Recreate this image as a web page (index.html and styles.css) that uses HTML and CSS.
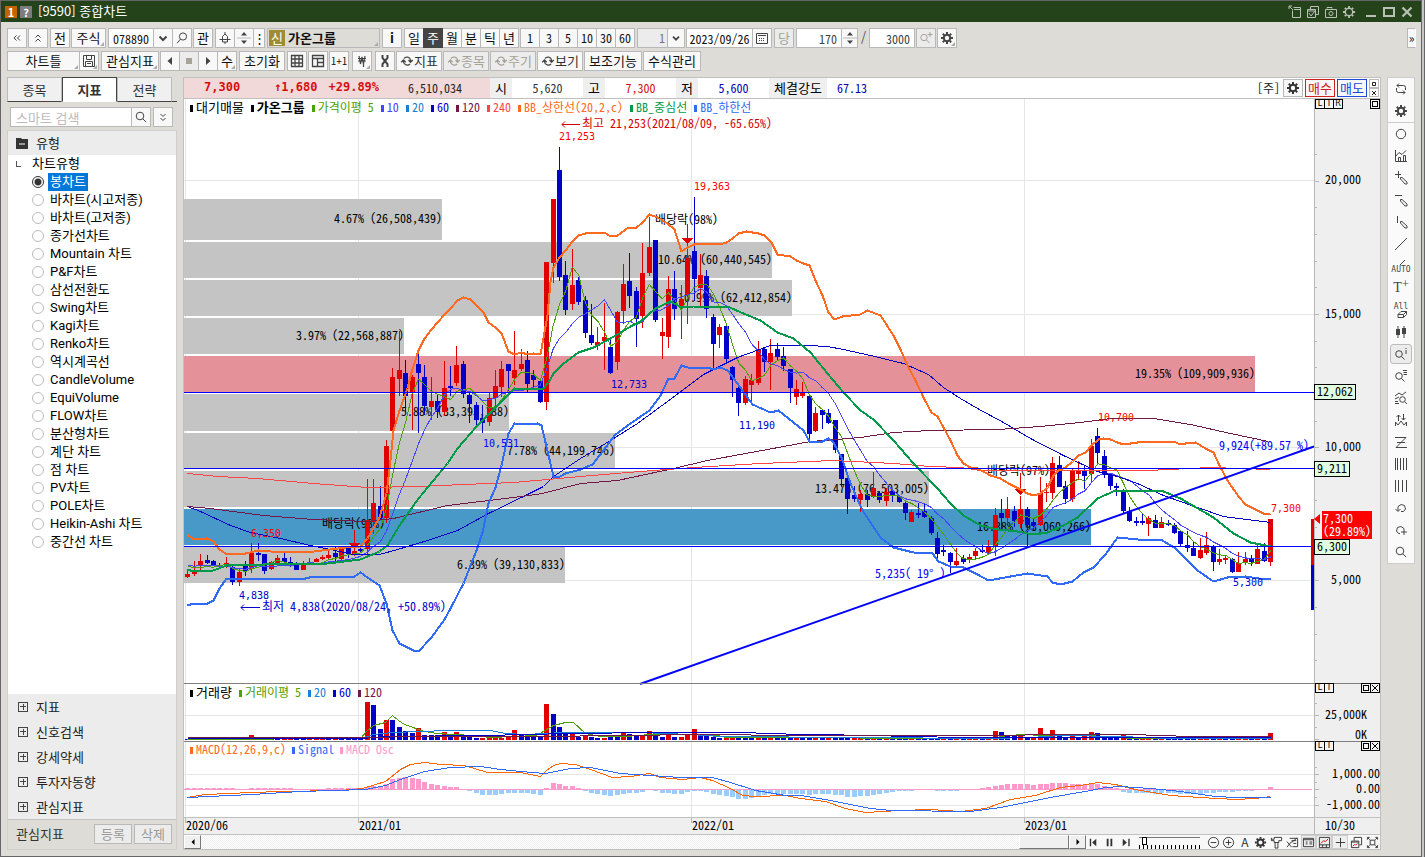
FILE: index.html
```html
<!DOCTYPE html>
<html lang="ko">
<head>
<meta charset="utf-8">
<title>[9590] 종합차트</title>
<link rel="stylesheet" href="styles.css">
</head>
<body>
<svg class="sheet" aria-hidden="true">
  <symbol id="gear" viewBox="0 0 14 14"><g fill="none" stroke="currentColor"><circle cx="7" cy="7" r="3.2" stroke-width="2"/><path stroke-width="2" d="M7 1v2M7 11v2M1 7h2M11 7h2M2.8 2.8l1.4 1.4M9.8 9.8l1.4 1.4M2.8 11.2l1.4-1.4M9.8 4.2l1.4-1.4"/></g></symbol>
  <symbol id="gearthin" viewBox="0 0 14 14"><g fill="none" stroke="currentColor"><circle cx="7" cy="7" r="3.7" stroke-width="1.4"/><path stroke-width="1.8" d="M7 1v2M7 11v2M1 7h2M11 7h2M2.8 2.8l1.3 1.3M9.9 9.9l1.3 1.3M2.8 11.2l1.3-1.3M9.9 4.1l1.3-1.3"/></g></symbol>
  <symbol id="lens" viewBox="0 0 14 14"><g fill="none" stroke="currentColor"><circle cx="6" cy="6" r="3.8"/><path d="M8.8 8.8l3.4 3.4"/></g></symbol>
  <symbol id="lensl" viewBox="0 0 14 14"><g fill="none" stroke="currentColor"><circle cx="8" cy="5.5" r="3.6"/><path d="M5.5 8.2l-3.5 4"/></g></symbol>
  <symbol id="lensplus" viewBox="0 0 14 14"><g fill="none" stroke="currentColor"><circle cx="5" cy="6.5" r="3.2"/><path d="M7.5 9l3 3M11 1v5M8.5 3.5h5"/></g></symbol>
  <symbol id="down" viewBox="0 0 14 14"><path fill="none" stroke="currentColor" stroke-width="2" d="M3.5 5.5L7 9l3.5-3.5"/></symbol>
  <symbol id="dleft" viewBox="0 0 14 14"><path fill="none" stroke="currentColor" d="M6.500 4.500L4 7l2.500 2.500M10 4.500L7.500 7l2.500 2.500"/></symbol>
  <symbol id="dup" viewBox="0 0 14 14"><path fill="none" stroke="currentColor" d="M4.500 6.500L7 4l2.500 2.500M4.500 10.500L7 8l2.500 2.500"/></symbol>
  <symbol id="ddown" viewBox="0 0 14 14"><path fill="none" stroke="currentColor" d="M4.500 4L7 6.500 9.500 4M4.500 8L7 10.500 9.500 8"/></symbol>
  <symbol id="bell" viewBox="0 0 14 14"><g fill="none" stroke="currentColor"><path d="M7 1v2M4.500 8V5.500L7 3l2.500 2.500V8M1.500 8.500h11M4.500 8.500v2.500h5V8.500M7 11v2"/></g></symbol>
  <symbol id="spin" viewBox="0 0 14 14"><path fill="currentColor" d="M4 4.500L7 1l3 3.500zM4 9.500L7 13l3-3.500z"/><path fill="#b8b8b8" d="M0 6.500h14v1H0z"/></symbol>
  <symbol id="calendar" viewBox="0 0 14 14"><g fill="none" stroke="currentColor"><path d="M1.500 2.500h11v10h-11zM3 4.500h8"/><path stroke-dasharray="1 1" d="M4 7.500h6M4 9.500h6"/></g></symbol>
  <symbol id="disk" viewBox="0 0 14 14"><path fill="none" stroke="currentColor" d="M1.500 1.500h11v11h-11zM4.500 1.500v4h5v-4M3.500 12.500v-5h7v5M5 9.500h4"/></symbol>
  <symbol id="table" viewBox="0 0 14 14"><path fill="none" stroke="currentColor" stroke-width="1.300" d="M1.500 1.500h11v11h-11zM1.500 5h11M1.500 9h11M5 1.500v11M9 1.500v11"/></symbol>
  <symbol id="panes" viewBox="0 0 14 14"><path fill="none" stroke="currentColor" stroke-width="1.300" d="M1.500 1.500h11v11h-11zM1.500 4.500h11M6.500 4.500v8M6.500 8.500h6"/></symbol>
  <symbol id="cycle" viewBox="0 0 14 14"><path fill="none" stroke="currentColor" stroke-width="1.300" d="M4 4.500C6 2 10 3 10.500 6v2M8.500 6l2 2.200L12.800 6M10 10C8 12 4 11 3.500 8V6M1.200 8.200L3.500 6l2.200 2.200"/></symbol>
  <symbol id="swap" viewBox="0 0 14 14"><path fill="none" stroke="currentColor" d="M3 3.500h6.500q2 0 2 2v2.500M5 1.500l-2 2 2 2M11 10.500H4.500q-2 0-2-2V6M9 8.500l2 2-2 2"/></symbol>
  <symbol id="tools" viewBox="0 0 14 14"><path fill="none" stroke="currentColor" stroke-width="2" d="M4.500 1v3l2.500 3-2.500 3v3M9.500 1v3L7 7l2.500 3v3"/></symbol>
  <symbol id="won" viewBox="0 0 14 14"><path fill="none" stroke="currentColor" stroke-width="1.200" d="M4 2l1.500 8L7 3l1.500 7L10 2M3 4.500h8M3 7h8M8.500 10v3"/></symbol>
  <symbol id="lcross" viewBox="0 0 14 14"><path fill="none" stroke="currentColor" d="M1 3.500h6M4.500 0v7M6.500 8V6.500H8l5 4.500v2h-2z"/></symbol>
  <symbol id="lh" viewBox="0 0 14 14"><path fill="none" stroke="currentColor" d="M1 2.500h7M6.500 8V6.500H8l5 4.500v2h-2z"/></symbol>
  <symbol id="lv" viewBox="0 0 14 14"><path fill="none" stroke="currentColor" d="M3.500 1v7M6.500 8V6.500H8l5 4.500v2h-2z"/></symbol>
  <symbol id="line" viewBox="0 0 14 14"><path fill="none" stroke="currentColor" d="M1 13L13 1"/></symbol>
  <symbol id="ring" viewBox="0 0 14 14"><circle cx="7" cy="7" r="4.700" fill="none" stroke="currentColor"/></symbol>
  <symbol id="stats" viewBox="0 0 14 14"><path fill="none" stroke="currentColor" d="M1.500 1v11.500H13M4.500 12V8.500h2V12M9.500 12V6.500h2V12M2 7l3-3.500 3 2L12 1.500"/></symbol>
  <symbol id="candles" viewBox="0 0 14 14"><path fill="currentColor" d="M2 4h4v6H2zM8 3h4v6H8zM3.500 1h1v12h-1zM9.500 1h1v12h-1z"/></symbol>
  <symbol id="erase" viewBox="0 0 14 7"><path fill="none" stroke="currentColor" d="M4 3.500l3-3h5.500l-3 3zM4 3.500v3h5.500v-3M9.500 6.500l3-3v-3"/></symbol>
  <symbol id="lensinfo" viewBox="0 0 14 14"><g fill="none" stroke="currentColor"><circle cx="5" cy="7" r="3.300"/><path d="M7.500 9.500l3 3M12 1v1M12 3v4"/></g></symbol>
  <symbol id="lenslist" viewBox="0 0 14 14"><g fill="none" stroke="currentColor"><circle cx="5" cy="7" r="3.300"/><path d="M7.500 9.500l3 3M9 1.500h4M9.500 3.500H13M9.500 5.500H13"/></g></symbol>
  <symbol id="lenschart" viewBox="0 0 14 14"><g fill="none" stroke="currentColor"><path d="M1 5l4-3 3 2 4-3M1 8l4-2M1 10.500h3M1 12.500h4"/><circle cx="8.500" cy="8.500" r="2.800"/><path d="M10.500 10.500l2.500 2.500"/></g></symbol>
  <symbol id="wave" viewBox="0 0 14 14"><path fill="none" stroke="currentColor" d="M1.500 13V9L4 12l3-4 3 4 2.500-3v4M4.500 8V2M2.500 4l2-2 2 2M9.500 1v6M7.500 5l2 2 2-2"/></symbol>
  <symbol id="zig" viewBox="0 0 14 14"><path fill="none" stroke="currentColor" d="M1 2.500h11L2 12.500h11M3 7.500h8"/></symbol>
  <symbol id="bars4" viewBox="0 0 14 14"><path fill="none" stroke="currentColor" d="M1.500 1v12M4.500 1v12M8.500 1v12M12.500 1v12"/></symbol>
  <symbol id="bars5" viewBox="0 0 14 14"><path fill="none" stroke="currentColor" d="M1.500 1v12M3.500 1v12M6.500 1v12M9.500 1v12M12.500 1v12"/></symbol>
  <symbol id="undo" viewBox="0 0 14 14"><path fill="none" stroke="currentColor" d="M4 10V5.500q3-3.500 6.500-1 2.500 4-1 6H7M1.500 8L4 10.500 6.500 8"/></symbol>
  <symbol id="redo" viewBox="0 0 14 14"><path fill="none" stroke="currentColor" d="M10 12V5.500q-3-3.500-6.500-1-2.500 4 1 6H6M7 9h6"/></symbol>
</svg>

<div class="window">
  <header class="titlebar">
    <span class="badge one">1</span><button class="badge help">?</button>
    <h1>[9590] 종합차트</h1>
    <div class="sys">
      <button aria-label="분리"><svg viewBox="0 0 14 14"><path fill="none" stroke="currentColor" d="M4.500 5.500v7h8v-10h-7M6 4.500h6M1 1l4 4M1 4V1h3"/></svg></button>
      <button aria-label="복사"><svg viewBox="0 0 14 14"><path fill="none" stroke="currentColor" d="M1.500 4.500h8v8h-8zM4.500 4V1.500h8v8H10M1.500 6h8M3 8l2 3 4-5"/></svg></button>
      <button aria-label="캡처"><svg viewBox="0 0 14 14"><path fill="none" stroke="currentColor" d="M1.500 4.500h11v8h-11zM3 3.500v-1h5v1"/><circle cx="7" cy="8.500" r="2" fill="none" stroke="currentColor"/></svg></button>
      <button aria-label="설정"><svg><use href="#gearthin"/></svg></button>
      <button class="wide" aria-label="최소화"><svg viewBox="0 0 14 14"><path fill="none" stroke="currentColor" stroke-width="2" d="M2 11h10"/></svg></button>
      <button class="wide" aria-label="최대화"><svg viewBox="0 0 14 14"><path fill="none" stroke="currentColor" stroke-width="2" d="M2 3h10v8H2z"/></svg></button>
      <button class="wide" aria-label="닫기"><svg viewBox="0 0 14 14"><path fill="none" stroke="currentColor" stroke-width="2.200" d="M2.500 2.500l9 9M11.500 2.500l-9 9"/></svg></button>
    </div>
  </header>

  <div class="toolbars">
    <div class="bar">
      <button class="b sq" aria-label="이전"><svg><use href="#dleft"/></svg></button>
      <button class="b sq" aria-label="접기"><svg><use href="#dup"/></svg></button>
      <button class="b sq m1">전</button>
      <button class="b w35 corner">주식</button>
      <div class="join m1"><input class="b w46 code" value="078890" aria-label="종목코드"><button class="b sq" aria-label="목록"><svg><use href="#down"/></svg></button><button class="b sq" aria-label="검색"><svg><use href="#lensl"/></svg></button></div>
      <button class="b sq">관</button>
      <div class="join m1"><button class="b sq" aria-label="알림"><svg><use href="#bell"/></svg></button><button class="b sq" aria-label="위아래"><svg><use href="#spin"/></svg></button><button class="b w12" aria-label="더보기">⋮</button></div>
      <button class="b stock corner m1"><span class="new">신</span><b>가온그룹</b></button>
      <button class="b sq m1"><b>i</b></button>
      <div class="join m1"><button class="b sq">일</button><button class="b sq on">주</button><button class="b sq">월</button><button class="b sq">분</button><button class="b sq">틱</button><button class="b sq">년</button></div>
      <div class="join digits"><button class="b sq">1</button><button class="b sq">3</button><button class="b sq">5</button><button class="b sq">10</button><button class="b sq">30</button><button class="b sq">60</button></div>
      <div class="pick m1"><select class="b" aria-label="간격"><option>1</option></select><svg><use href="#down"/></svg></div>
      <div class="join"><input class="b w67 date" value="2023/09/26" aria-label="날짜"><button class="b sq" aria-label="달력"><svg><use href="#calendar"/></svg></button></div>
      <button class="b sq off m1">당</button>
      <div class="join m1"><input class="b w46 num" value="170" aria-label="봉 개수"><button class="b w16" aria-label="증감"><svg><use href="#spin"/></svg></button></div>
      <span class="slash">/</span>
      <input class="b w46 num" value="3000" aria-label="전체 개수">
      <button class="b sq off" aria-label="확대"><svg><use href="#lensplus"/></svg></button>
      <button class="b sq corner" aria-label="환경설정"><svg><use href="#gear"/></svg></button>
      <button class="b fold" aria-label="펼치기">»</button>
    </div>
    <div class="bar">
      <div class="join"><button class="b w73 corner">차트틀</button><button class="b sq corner" aria-label="저장"><svg><use href="#disk"/></svg></button></div>
      <button class="b w58 corner m1">관심지표</button>
      <div class="join"><button class="b sq" aria-label="이전"><svg viewBox="0 0 14 14"><path fill="currentColor" d="M9 3v8L4.500 7z"/></svg></button><button class="b sq off" aria-label="정지"><svg viewBox="0 0 14 14"><path fill="currentColor" d="M4 4h6v6H4z"/></svg></button><button class="b sq" aria-label="다음"><svg viewBox="0 0 14 14"><path fill="currentColor" d="M5 3v8l4.500-4z"/></svg></button><button class="b sq corner">수</button></div>
      <button class="b w46 m1">초기화</button>
      <button class="b sq m1" aria-label="표"><svg><use href="#table"/></svg></button>
      <button class="b sq" aria-label="분할"><svg><use href="#panes"/></svg></button>
      <button class="b sq tiny">1+1</button>
      <button class="b sq corner m2" aria-label="원화"><svg><use href="#won"/></svg></button>
      <button class="b sq m2" aria-label="도구"><svg><use href="#tools"/></svg></button>
      <button class="b w46 ic"><svg><use href="#cycle"/></svg>지표</button>
      <button class="b w46 ic off"><svg><use href="#cycle"/></svg>종목</button>
      <button class="b w46 ic off"><svg><use href="#cycle"/></svg>주기</button>
      <button class="b w46 ic"><svg><use href="#cycle"/></svg>보기</button>
      <button class="b w58">보조기능</button>
      <button class="b w58">수식관리</button>
    </div>
  </div>

  <div class="work">
    <aside class="side">
      <nav class="tabs"><button>종목</button><button class="sel">지표</button><button>전략</button></nav>
      <div class="find">
        <input placeholder="스마트 검색" aria-label="스마트 검색"><button class="b sq" aria-label="검색"><svg><use href="#lens"/></svg></button><button class="b sq more" aria-label="더보기"><svg><use href="#ddown"/></svg></button>
      </div>
      <div class="panel">
        <h2 class="head"><svg viewBox="0 0 14 14"><path fill="#333" d="M1 2h5l1 1h6v10H1z"/><path stroke="#fff" d="M4 8h6"/></svg>유형</h2>
        <fieldset class="tree">
          <legend>차트유형</legend>
          <label><input type="radio" name="t" checked><span>봉차트</span></label>
          <label><input type="radio" name="t"><span>바차트(시고저종)</span></label>
          <label><input type="radio" name="t"><span>바차트(고저종)</span></label>
          <label><input type="radio" name="t"><span>종가선차트</span></label>
          <label><input type="radio" name="t"><span>Mountain 차트</span></label>
          <label><input type="radio" name="t"><span>P&amp;F차트</span></label>
          <label><input type="radio" name="t"><span>삼선전환도</span></label>
          <label><input type="radio" name="t"><span>Swing차트</span></label>
          <label><input type="radio" name="t"><span>Kagi차트</span></label>
          <label><input type="radio" name="t"><span>Renko차트</span></label>
          <label><input type="radio" name="t"><span>역시계곡선</span></label>
          <label><input type="radio" name="t"><span>CandleVolume</span></label>
          <label><input type="radio" name="t"><span>EquiVolume</span></label>
          <label><input type="radio" name="t"><span>FLOW차트</span></label>
          <label><input type="radio" name="t"><span>분산형차트</span></label>
          <label><input type="radio" name="t"><span>계단 차트</span></label>
          <label><input type="radio" name="t"><span>점 차트</span></label>
          <label><input type="radio" name="t"><span>PV차트</span></label>
          <label><input type="radio" name="t"><span>POLE차트</span></label>
          <label><input type="radio" name="t"><span>Heikin-Ashi 차트</span></label>
          <label><input type="radio" name="t"><span>중간선 차트</span></label>
        </fieldset>
        <div class="groups">
          <button><i></i>지표</button><button><i></i>신호검색</button><button><i></i>강세약세</button><button><i></i>투자자동향</button><button><i></i>관심지표</button>
        </div>
        <div class="foot"><span>관심지표</span><button>등록</button><button>삭제</button></div>
      </div>
    </aside>

    <main class="chart">
      <div class="quote">
        <div class="hot"><b>7,300</b><b class="q2">↑1,680</b><b class="q3">+29.89%</b><span class="q4">6,510,034</span></div>
        <span class="k">시</span><span class="v">5,620</span>
        <span class="k">고</span><span class="v red">7,300</span>
        <span class="k">저</span><span class="v blue">5,600</span>
        <span class="k k4">체결강도</span><span class="v blue last">67.13</span>
        <span class="period">[주]</span>
        <button class="cfg" aria-label="설정"><svg><use href="#gear"/></svg></button>
        <button class="buy">매수</button><button class="sell">매도</button>
        <div class="mini"><button aria-label="최대화"><svg viewBox="0 0 8 8"><path fill="none" stroke="#222" d="M2.500 2.500h3v3h-3z"/></svg></button><button aria-label="닫기"><svg viewBox="0 0 8 8"><path stroke="#222" d="M2 2l4 4M6 2L2 6"/></svg></button></div>
      </div>
      <div class="canvas">
        <svg id="plot" viewBox="184 99 1196 735" role="img" aria-label="가온그룹 주봉 차트"></svg>
        <div class="legend top"><span class="kr">대기매물</span><span class="kr strong">가온그룹</span><span class="g">가격이평 5</span><span class="v1">10</span><span class="v2">20</span><span class="v3">60</span><span class="v4">120</span><span class="v5">240</span><span class="o">BB_상한선(20,2,c)</span><span class="gm">BB_중심선</span><span class="bl">BB_하한선</span></div>
        <div class="legend vol"><span class="kr">거래량</span><span class="g">거래이평 5</span><span class="v2">20</span><span class="v3">60</span><span class="v4">120</span></div>
        <div class="legend macd"><span class="o">MACD(12,26,9,c)</span><span class="bl">Signal</span><span class="pk">MACD Osc</span></div>
        <div class="ctl c1"><button>L</button><button>I</button><button>R</button><button class="far box" aria-label="최대화"></button></div>
        <div class="ctl c2"><button>L</button><button>I</button><button class="far box" aria-label="최대화"></button><button class="x" aria-label="닫기"><svg viewBox="0 0 8 8"><path stroke="#000" d="M1 1l6 6M7 1L1 7"/></svg></button></div>
        <div class="ctl c3"><button>L</button><button>I</button><button class="far box" aria-label="최대화"></button><button class="x" aria-label="닫기"><svg viewBox="0 0 8 8"><path stroke="#000" d="M1 1l6 6M7 1L1 7"/></svg></button></div>
      </div>
      <div class="scroll">
        <button class="arrow" aria-label="왼쪽"><svg viewBox="0 0 8 8"><path d="M5.500 1v6L2.500 4z"/></svg></button>
        <div class="track"><div class="thumb"></div></div>
        <button class="arrow" aria-label="오른쪽"><svg viewBox="0 0 8 8"><path d="M2.500 1v6l3-3z"/></svg></button>
        <div class="tools">
          <button aria-label="처음"><svg viewBox="0 0 14 14"><path fill="currentColor" d="M3 3h1.500v8H3zM10 3v8L5.500 7z"/></svg></button>
          <button aria-label="일시정지"><svg viewBox="0 0 14 14"><path fill="currentColor" d="M4 3h2v8H4zM8 3h2v8H8z"/></svg></button>
          <button aria-label="끝"><svg viewBox="0 0 14 14"><path fill="currentColor" d="M10 3h1.500v8H10zM4 3v8l4.500-4z"/></svg></button>
          <label class="range"><input type="range" min="0" max="16" value="1" aria-label="속도"></label>
          <button aria-label="축소"><svg viewBox="0 0 14 14"><circle cx="7" cy="7" r="5.500" fill="none" stroke="currentColor"/><path stroke="currentColor" d="M4 7h6"/></svg></button>
          <button aria-label="확대"><svg viewBox="0 0 14 14"><circle cx="7" cy="7" r="5.500" fill="none" stroke="currentColor"/><path stroke="currentColor" d="M4 7h6M7 4v6"/></svg></button>
          <button>A</button>
          <button aria-label="설정"><svg><use href="#gear"/></svg></button>
          <button aria-label="도구"><svg viewBox="0 0 14 14"><path fill="none" stroke="currentColor" d="M1.500 2v3h3v2h5V5h3V1.500h-8v2h-3M5.500 7v6h3V7"/></svg></button>
          <button aria-label="엑셀"><svg viewBox="0 0 14 14"><path fill="none" stroke="currentColor" d="M4 2.500h8.500v9H7M1 6l5 6M6 6l-5 6M6 5h5M8 8h3M12 2L6 7"/></svg></button>
          <button class="on" aria-label="데이터"><svg viewBox="0 0 14 14"><path fill="none" stroke="currentColor" d="M1.500 2.500h11v9h-11zM1.500 4h11M4 6.500h2M4 8.500h2M8 6.500h3M8 8.500h3"/></svg></button>
          <button class="on" aria-label="차트"><svg viewBox="0 0 14 14"><path fill="none" stroke="currentColor" d="M1.500 1.500h11v11h-11zM1.500 9.500h11M5 9.500v3M9 9.500v3"/><path fill="none" stroke="#c00" d="M3 8l3-3 2 1 3-3"/></svg></button>
          <button class="on" aria-label="십자선"><svg viewBox="0 0 14 14"><path stroke="currentColor" d="M2 7h10M7 2v10"/></svg></button>
          <button aria-label="새 창"><svg viewBox="0 0 14 14"><path fill="none" stroke="currentColor" d="M1.500 5.500h8v7h-8zM4.500 5V1.500h8v8H10M1.500 6.500h8"/><path fill="none" stroke="#c00" d="M3 11l2-2 1 1 2-2"/></svg></button>
          <button aria-label="전체화면"><svg viewBox="0 0 14 14"><path fill="none" stroke="currentColor" d="M4.500 4.500h5v5h-5zM1.500 4V1.500H4M10 1.500h2.500V4M1.500 10v2.500H4M10 12.500h2.500V10M2 2l2 2M12 2l-2 2M2 12l2-2M12 12l-2-2"/></svg></button>
        </div>
      </div>
    </main>

    <nav class="rail" aria-label="그리기 도구">
      <button aria-label="전환"><svg><use href="#swap"/></svg></button>
      <button class="cut" aria-label="설정"><svg><use href="#gear"/></svg></button>
      <button aria-label="원"><svg><use href="#ring"/></svg></button>
      <button aria-label="통계"><svg><use href="#stats"/></svg></button>
      <button aria-label="십자 그리기"><svg><use href="#lcross"/></svg></button>
      <button aria-label="수평선"><svg><use href="#lh"/></svg></button>
      <button aria-label="수직선"><svg><use href="#lv"/></svg></button>
      <button aria-label="추세선"><svg><use href="#line"/></svg></button>
      <button class="stack"><svg class="half" viewBox="0 0 14 7"><path stroke="currentColor" d="M6 6l5-5"/></svg>AUTO</button>
      <button class="txt">T<sup>+</sup></button>
      <button class="stack all">All<svg class="half"><use href="#erase"/></svg></button>
      <button aria-label="봉"><svg><use href="#candles"/></svg></button>
      <button class="on" aria-label="정보 보기"><svg><use href="#lensinfo"/></svg></button>
      <button aria-label="목록 보기"><svg><use href="#lenslist"/></svg></button>
      <button aria-label="차트 보기"><svg><use href="#lenschart"/></svg></button>
      <button aria-label="파동"><svg><use href="#wave"/></svg></button>
      <button aria-label="지그재그"><svg><use href="#zig"/></svg></button>
      <button aria-label="시간대"><svg><use href="#bars5"/></svg></button>
      <button aria-label="등간격"><svg><use href="#bars4"/></svg></button>
      <button aria-label="실행 취소"><svg><use href="#undo"/></svg></button>
      <button aria-label="다시 실행"><svg><use href="#redo"/></svg></button>
      <button aria-label="검색"><svg><use href="#lens"/></svg></button>
    </nav>
  </div>
</div>
<script src="chart.js"></script>
</body>
</html>
```
FILE: styles.css
```css
*, *::before, *::after { box-sizing: border-box; }
html { height: 100%; }
body {
  margin: 0; min-height: 100%; display: flex; flex-direction: column;
  padding-right: 2px; border-right: 1px solid #666; background: #c4c4c4;
  font: 13px/18px "Noto Sans CJK KR", "Noto Sans", sans-serif; color: #000;
}
button, input, select { font: inherit; color: inherit; margin: 0; padding: 0; border-radius: 0; min-width: 0; }
button { background: none; border: 0; display: inline-flex; align-items: center; justify-content: center; white-space: nowrap; }
svg { width: 14px; height: 14px; flex: none; display: block; }
.sheet { position: absolute; width: 0; height: 0; }
.window { flex: 1; display: flex; flex-direction: column; border: 1px solid #666; background: #dddcd6; }

.titlebar { height: 21px; background: #25431b; color: #fff; display: flex; align-items: center; gap: 3px; padding-left: 4px; }
.titlebar h1 { margin: 0 0 2px 3px; font-size: 13px; font-weight: 400; line-height: 18px; flex: 1; }
.badge { width: 12px; height: 12px; font-size: 11px; font-weight: 700; line-height: 12px; text-align: center; color: #fff; }
.one { background: #c26400; }
.help { background: #7c7c7c; }
.sys { display: flex; gap: 4px; padding-right: 7px; color: #b9c0b4; align-items: center; }
.sys .wide { margin-left: 4px; }
.sys .wide + .wide { margin-left: 0; }

.toolbars { padding: 6px 5px 6px 6px; display: flex; flex-direction: column; gap: 3px; }
.bar { display: flex; gap: 1px; height: 20px; align-items: stretch; }
.join { display: flex; }
.join > * + * { margin-left: -1px; }
.m1 { margin-left: 1px; } .m2 { margin-left: 2px; }
.b { border: 1px solid #b8b8b8; background: #f8f8f8; height: 20px; line-height: 18px; position: relative; flex: none; color: #111; }
.sq { width: 20px; } .w12 { width: 12px; } .w16 { width: 17px; } .w35 { width: 35px; } .w46 { width: 46px; }
.w58 { width: 58px; } .w67 { width: 67px; } .w73 { width: 73px; }
.b svg { color: #444; }
.on.b { background: #444; color: #fff; border-color: #444; z-index: 1; }
.off.b, .off.b svg { color: #a5a398; background: #ececec; }
.corner::after { content: ""; position: absolute; right: 1px; bottom: 1px; border: 2px solid; border-color: transparent #aaa #aaa transparent; }
.code, .date, .num, .pick select, .digits .b { font-family: "Noto Sans Mono CJK KR", "Noto Sans CJK KR", monospace; font-size: 12px; }
.code, .date { text-align: center; background: #fff; }
.num { text-align: right; padding-right: 4px; background: #fff; color: #444; }
.stock { width: 113px; justify-content: flex-start; background: #dddcd6; padding-left: 1px; gap: 3px; }
.new { background: #a08c30; color: #fff; width: 16px; height: 16px; line-height: 15px; }
.pick { position: relative; width: 48px; }
.pick select { width: 100%; appearance: none; padding-left: 21px; background: #ececec; color: #777; }
.pick svg { position: absolute; right: 1px; top: 1px; width: 17px; height: 18px; padding: 2px; border-left: 1px solid #b8b8b8; background: #f8f8f8; pointer-events: none; color: #444; }
.slash { width: 9px; text-align: center; color: #555; }
.fold { margin-left: auto; width: 9px; font-size: 12px; border-right-color: #fff; }
.ic { gap: 0; color: #333; }
.tiny { font-size: 10px; }

.work { flex: 1; display: flex; gap: 6px; padding: 0 6px 6px; align-items: flex-start; }
.side { width: 170px; flex: none; align-self: stretch; display: flex; flex-direction: column; }
.tabs { display: flex; height: 25px; border-bottom: 1px solid #444; }
.tabs button { width: 55px; height: 25px; background: #f0f0f0; border: 1px solid #bbb; border-bottom-color: #444; color: #333; }
.tabs .sel { background: #fff; border-color: #444 #444 #fff; font-weight: 700; }
.find { display: flex; padding: 5px 4px 3px 3px; }
.find input { flex: 1; width: 0; height: 20px; border: 1px solid #b8b8b8; background: #fff; padding-left: 5px; }
.find input::placeholder { color: #bbb; opacity: 1; }
.find .sq { margin-left: -1px; }
.find .more { margin-left: 2px; }
.panel { flex: 1; display: flex; flex-direction: column; border: 1px solid #cfcfcb; background: #fff; }
.head { margin: 0; height: 24px; background: #ececec; font-size: 13px; font-weight: 400; display: flex; align-items: center; gap: 7px; padding-left: 7px; color: #222; }
.tree { flex: 1; margin: 0; border: 0; padding: 0 0 0 24px; min-width: 0; font-family: Roboto, "Noto Sans CJK KR", sans-serif; }
.tree legend { padding: 0; height: 18px; position: relative; }
.tree legend::before { content: ""; position: absolute; left: -16px; top: 6px; width: 5px; height: 6px; border: solid #555; border-width: 0 0 1px 1px; }
.tree label { display: flex; align-items: center; gap: 4px; height: 18px; }
.tree input { appearance: none; width: 12px; height: 12px; border: 1px solid #bbb; border-radius: 50%; background: #fff; }
.tree input:checked { border-color: #333; background: radial-gradient(#333 0 3px, #fff 4px); }
.tree label span { padding: 0 2px; line-height: 18px; }
.tree input:checked + span { background: #0078d7; color: #fff; }
.groups { display: flex; flex-direction: column; background: #ececec; }
.groups button { height: 25px; justify-content: flex-start; padding-left: 10px; gap: 8px; color: #222; }
.groups i { width: 10px; height: 10px; border: 1px solid #444; background: linear-gradient(#444, #444) center / 6px 1px no-repeat, linear-gradient(#444, #444) center / 1px 6px no-repeat; }
.foot { height: 30px; background: #dddcd6; border-top: 1px solid #c4c4c0; display: flex; align-items: center; gap: 2px; padding: 0 4px 2px 8px; }
.foot span { flex: 1; color: #333; }
.foot button { width: 38px; height: 20px; border: 1px solid #b8b8b8; background: #ececec; color: #999; }

.chart { flex: 1; min-width: 0; border: 1px solid #c0c0c0; background: #fff; }
.quote { display: flex; height: 21px; border-bottom: 1px solid #c0c0c0; line-height: 20px; font-family: "Noto Sans Mono CJK KR", "Noto Sans CJK KR", monospace; font-size: 12px; }
.hot { width: 306px; background: #f1d8d9; display: flex; padding-left: 20px; color: #d40f0f; line-height: 19px; }
.hot b { font-size: 12px; font-family: "DejaVu Sans Mono", "Noto Sans CJK KR", monospace; }
.hot .q2 { margin-left: 34px; }
.hot .q3 { margin-left: 11px; }
.hot .q4 { color: #222; margin-left: 29px; }
.k { width: 22px; background: #efefef; text-align: center; font-size: 13px; line-height: 19px; }
.k4 { width: 58px; }
.v { width: 71px; text-align: center; color: #333; line-height: 19px; }
.last { width: 50px; }
.red { color: #d40f0f; } .blue { color: #0000b4; }
.period { margin-left: auto; padding-right: 3px; color: #222; line-height: 19px; }
.cfg, .buy, .sell { border: 1px solid #b8b8b8; background: #f8f8f8; width: 20px; height: 18px; margin: 1px 2px 0 0; color: #333; }
.buy, .sell { width: 30px; font-size: 13px; }
.buy { color: #d02020; border-color: #d02020; }
.sell { color: #2048d8; border-color: #2048d8; }
.mini { width: 11px; padding-top: 1px; display: flex; flex-direction: column; }
.mini button { width: 10px; height: 9px; border: 1px solid #bbb; }
.mini svg, .ctl svg { width: 8px; height: 8px; }

.canvas { position: relative; }
#plot { width: 100%; height: auto; }
#plot text { font: 12px "Noto Sans Mono CJK KR", "Noto Sans CJK KR", monospace; white-space: pre; }
#plot text.p { font: 10px "DejaVu Sans Mono", monospace; }
.legend { position: absolute; left: 6px; display: flex; gap: 7px; font: 12px/16px "Noto Sans Mono CJK KR", "Noto Sans CJK KR", monospace; white-space: nowrap; }
.legend .kr { font-size: 13px; }
.legend span::before { content: ""; display: inline-block; width: 3px; height: 7px; margin-right: 3px; background: currentColor; }
.strong { font-weight: 700; }
.top { top: 0; } .vol { top: 79.600%; } .macd { top: 87.400%; }
.macd.legend { gap: 6px; }
.g { color: #4ca000; } .v1 { color: #4646ff; } .v2 { color: #1880d8; } .v3 { color: #0000c8; } .v4 { color: #701848; }
.v5 { color: #ff4646; } .o { color: #ff6a20; } .gm { color: #009a48; } .bl { color: #2f6bf5; } .pk { color: #ff99cc; }
.ctl { position: absolute; right: 0; width: 65px; display: flex; }
.ctl button { width: 10px; height: 10px; border: 1px solid #000; font: 8px/8px "DejaVu Sans", sans-serif; margin-right: -1px; background: #f4f4f4; }
.ctl .far { margin-left: auto; }
.ctl button:last-child { margin-right: 0; }
.ctl .box::before { content: ""; width: 6px; height: 6px; border: 1px solid #000; }
.c1 { top: 0; } .c2 { top: 79.500%; } .c3 { top: 87.400%; }

.scroll { display: flex; height: 15px; border-top: 1px solid #c0c0c0; background: #f8f8f8; }
.arrow { width: 17px; background: #f0f0f0; border: 1px solid #fff; border-right-color: #777; border-bottom-color: #777; }
.arrow svg { width: 8px; height: 8px; }
.track { flex: 1; display: flex; justify-content: flex-end; background: repeating-conic-gradient(#fff 0 25%, #f0f0f0 0 50%) 0 0 / 2px 2px; }
.thumb { width: 50px; background: #f0f0f0; border: 1px solid #fff; border-right-color: #777; border-bottom-color: #777; }
.tools { width: 294px; display: flex; color: #333; justify-content: flex-end; }
.tools button { width: 16px; font-size: 12px; }
.tools svg { width: 13px; height: 13px; }
.tools .on { border: 1px solid #ccc; background: #eee; }
.range { width: 72px; display: flex; justify-content: center; }
.range input { appearance: none; width: 61px; height: 14px; background: linear-gradient(#777, #777) 0 2px / 100% 1px no-repeat, repeating-linear-gradient(90deg, #000 0 1px, transparent 1px 4px) 0 100% / 100% 4px no-repeat; }
.range input::-webkit-slider-thumb { appearance: none; width: 5px; height: 8px; background: #fff; border: 1px solid #000; margin-top: -3px; }

.rail { width: 28px; flex: none; border: 1px solid #ccc; background: #fafafa; display: flex; flex-direction: column; align-items: center; color: #444; }
.rail button { width: 26px; height: 22px; }
.rail .cut { height: 23px; border-bottom: 1px solid #ccc; }
.rail .on { width: 22px; height: 20px; margin: 1px 0; border: 1px solid #bbb; border-radius: 3px; background: #ececec; }
.rail .stack { flex-direction: column; font: 8px/8px "DejaVu Sans Mono", monospace; }
.rail .half { height: 7px; }
.rail .txt { font: 14px/18px "Liberation Serif", serif; }
.rail sup { font-size: 12px; line-height: 8px; margin-top: -8px; }
```
FILE: chart.js
```js
const RED = '#e00000', BLUE = '#0000c8';
const X = i => 187.4 + 6.407 * i;

// Weekly bars: direction, high, body top, body bottom, low
const bars = `r571 574 577 578|r561 570 574 576|r554 561 565 570|b555 560 563 564|b560 561 565 566|b563 565 567 568|r557 563 567 568|b565 567 582 585|r568 572 582 586|b561 566 571 576|r543 553 569 573|b543 553 555 561|b554 554 571 574|r561 562 569 570|r555 558 563 566|b553 558 562 563|b557 562 565 567|b562 565 570 570|r561 563 570 570|r558 562 565 565|r558 559 562 562|r555 557 559 560|r551 555 558 560|b547 553 557 561|r546 549 559 560|b546 548 554 558|r548 551 554 556|b546 549 551 553|r479 520 549 555|r479 503 522 534|b486 506 518 520|r440 446 518 523|r368 377 431 434|r331 370 379 396|b360 373 396 412|r375 377 392 430|b352 364 373 433|b365 377 406 415|r377 401 407 420|b395 401 412 418|r361 388 412 416|b366 386 388 396|r346 365 383 386|b361 364 394 398|b392 395 404 423|b402 405 420 426|b405 418 423 433|r393 398 422 426|r370 386 398 407|r361 369 387 397|b364 364 371 391|r331 370 378 385|r349 364 369 371|b351 360 384 392|b370 375 380 387|b378 381 402 403|r262 262 402 410|r199 199 263 283|b147 170 277 281|b261 275 310 315|r249 285 304 310|b277 280 302 305|b296 300 333 338|b304 335 343 345|r327 342 346 350|r303 337 341 370|b340 347 373 374|r311 312 362 370|r264 284 311 324|b253 281 296 308|b287 291 319 347|r243 273 316 328|r217 247 273 276|b240 240 320 322|r318 332 336 359|r276 289 337 348|b271 289 309 320|r285 299 307 339|r243 258 296 324|b197 251 279 301|r254 275 288 307|b270 276 309 318|b314 317 344 370|r324 327 335 348|b325 326 359 362|b366 367 380 397|b383 388 403 416|r376 379 403 405|r374 380 385 403|r341 349 383 385|b348 349 362 372|r339 353 362 390|b343 349 357 361|b347 356 366 371|b369 369 388 403|r380 389 397 405|r382 393 396 398|b394 396 434 440|r407 413 431 432|b410 410 415 429|b409 413 423 424|b420 420 450 453|b454 454 479 487|b478 478 499 514|b486 495 499 502|r490 494 500 512|b490 494 500 507|r472 488 497 498|b491 493 500 503|r488 492 501 506|b490 491 496 502|b495 496 502 503|b502 503 513 520|r510 512 522 522|b503 513 515 518|b504 511 517 518|b516 518 533 535|b532 538 554 560|b545 550 552 556|b552 553 562 573|r548 561 565 566|b555 558 562 564|r554 557 559 563|r548 551 556 559|b545 550 552 553|r540 547 552 555|r508 515 547 556|b499 513 518 529|r497 509 518 522|b506 511 521 527|r496 509 524 528|b507 509 525 547|b519 522 526 530|r477 493 525 526|r483 492 493 502|r457 463 493 499|b456 465 487 487|b481 486 499 504|r469 471 499 502|r461 471 474 480|b465 471 476 489|r439 446 474 483|b428 436 453 463|b450 456 475 478|b473 474 486 490|b483 486 488 496|b489 490 511 513|b507 511 521 522|b517 521 523 526|b513 521 523 525|r516 518 524 536|b515 520 528 528|r517 522 528 528|b520 523 525 526|b523 525 533 534|b531 531 544 546|b531 545 548 552|b541 548 556 556|r538 550 558 559|r532 545 553 555|b545 546 562 571|r549 559 562 565|r555 558 560 564|b558 559 572 573|r552 563 572 572|r552 559 563 565|b555 558 562 566|r545 549 564 564|b543 551 561 562|r519 519 562 566`
  .split('|').map(s => [s[0] === 'r', ...s.slice(1).split(' ').map(Number)]);

// Volume bar heights, negative when the bar is blue
const volume = [-1,1,-1,1,1,-1,1,-1,-1,-1,5,-1,-1,1,-1,1,1,-1,-1,1,1,1,-1,1,-1,-1,-2,-2,38,-35,-11,20,-20,-13,-9,-7,12,-5,-5,-5,8,-5,8,-5,-5,-2,2,2,2,2,3,10,-5,-5,-4,-4,36,-26,-13,-6,7,-3,5,-3,-2,2,-3,-3,7,-6,-4,5,9,-5,-3,5,-3,3,6,11,-5,-5,-3,-2,2,2,-2,-2,-2,2,-2,2,-2,-3,-2,2,-2,-3,2,-2,2,-2,-3,-2,2,2,-2,2,-2,2,-1,-2,-1,2,-1,-1,-1,-1,2,-2,2,-1,1,1,-1,3,9,-8,-5,-4,5,-2,3,12,-4,10,-5,-3,5,-2,5,8,-7,-3,-3,-3,5,-4,-1,1,1,-1,1,-1,-1,-1,-2,-2,2,3,-2,1,-1,-1,1,1,-1,2,-2,7];

const osc = [1,1,1,1,1,1,1,1,0,0,1,1,1,1,1,1,1,0,0,0,0,0,1,1,1,1,1,1,2,3,3,5,10,11,12,11,10,7,5,4,3,2,2,0,-1,-3,-5,-5,-5,-4,-3,-3,-3,-3,-4,-5,1,6,5,3,3,1,-1,-3,-4,-5,-6,-5,-4,-3,-3,-2,0,-1,-3,-3,-4,-4,-2,-1,-1,-2,-4,-5,-6,-7,-9,-9,-8,-6,-5,-4,-4,-4,-4,-4,-4,-5,-4,-4,-4,-5,-5,-7,-7,-6,-6,-5,-4,-3,-2,-1,-1,-1,0,0,0,-1,-1,-1,-1,0,0,0,1,2,3,4,5,5,5,5,4,5,5,6,6,6,5,5,4,5,5,3,2,1,-2,-3,-3,-3,-3,-4,-3,-3,-3,-4,-4,-4,-4,-3,-3,-2,-2,-2,-1,-1,-1,0,0,2];

const curves = [
  ['#0000c8', 1, '187,506 200,511 230,525 250,532 280,538 310,545 330,549 353,554 379,554 397,549 427,540 457,530 488,513 523,496 543,486 553,476 580,458 610,440 637,423 667,401 695,380 703,374 737,357 770,345 807,345 827,346 843,349 870,355 903,363 928,374 943,387 960,398 977,408 1003,422 1030,438 1063,455 1097,471 1117,476 1137,483 1163,495 1197,507 1223,516 1270,522'],
  ['#701848', 1, '187,506 210,508 263,515 313,519 367,521 393,518 447,505 513,497 542,493 580,483 617,480 673,468 707,460 767,449 810,441 860,437 893,432 930,430 997,429 1040,426 1080,422 1110,418 1153,418 1190,424 1230,433 1268,441'],
  ['#ff4646', 1, '187,473 217,476 257,478 313,483 367,487 417,486 463,484 513,482 547,479 580,476 627,472 693,467 760,463 833,460 893,463 930,466 960,467 980,470 1147,470 1210,467 1270,469'],
  ['#ff6a20', 2, '187,534 193,539 206,538 213,541 219,549 225,553 245,553 258,550 270,551 305,552 330,549 353,546 360,546 367,538 379,517 386,493 390,460 393,430 399,410 407,388 411,372 418,350 424,338 431,329 437,322 444,314 450,308 457,300 463,297 470,299 477,306 483,312 488,322 495,327 501,333 508,351 514,354 521,352 527,354 533,353 540,354 547,315 550,282 553,267 559,257 565,250 572,241 578,235 585,233 591,232 604,232 610,236 617,235 628,227 636,227 642,222 649,214 657,217 667,223 674,229 681,251 687,247 694,244 713,243 719,244 726,242 732,238 738,233 746,231 758,233 764,235 771,242 777,254 790,256 796,260 803,263 809,265 815,280 822,295 828,312 834,319 842,316 860,314 867,310 880,315 893,335 900,349 908,367 915,380 923,397 931,412 937,416 943,427 950,440 957,455 963,463 970,467 977,468 990,475 1000,478 1008,483 1020,489 1027,493 1033,495 1040,493 1047,487 1053,475 1058,470 1065,467 1072,461 1078,455 1085,452 1091,445 1098,439 1103,438 1110,439 1117,442 1123,444 1137,442 1173,441 1180,444 1185,443 1195,442 1205,448 1213,452 1219,465 1227,480 1238,496 1245,504 1257,510 1265,514 1270,513'],
  ['#009a48', 2, '187,569 193,571 213,570 226,565 263,564 327,563 360,559 379,551 387,545 399,525 418,498 447,463 457,448 476,426 500,402 514,388 542,389 548,382 553,373 563,363 578,352 593,347 610,338 630,326 640,321 655,308 670,301 681,307 693,306 727,306 743,313 760,320 777,332 793,338 810,352 827,373 843,392 860,410 873,419 893,440 913,463 937,488 950,503 963,515 980,525 997,529 1017,531 1033,534 1047,532 1063,525 1077,517 1097,498 1115,490 1163,491 1180,498 1213,517 1233,533 1250,542 1270,546'],
  ['#2f6bf5', 2, '187,605 193,603 207,603 213,600 219,588 226,578 305,578 313,576 354,576 360,572 367,577 379,585 386,603 392,630 399,643 413,650 418,651 431,637 444,619 450,608 463,583 476,550 482,532 488,503 495,487 501,465 508,433 514,423 521,424 537,423 541,425 553,476 558,477 565,473 580,469 592,464 603,450 615,434 630,423 649,410 660,395 668,378 674,378 681,365 687,367 707,367 713,369 720,367 727,370 737,383 752,404 770,412 778,410 803,430 809,441 822,441 828,438 833,442 841,457 850,483 862,510 880,537 893,547 913,552 932,553 938,561 950,566 963,567 977,574 988,580 1010,576 1027,573 1047,576 1052,582 1060,584 1072,581 1083,572 1093,567 1105,554 1117,537 1137,539 1162,540 1175,548 1197,570 1213,581 1227,577 1245,576 1258,578 1270,578'],
  ['#4ca000', 1, '187,739 360,738 366,731 373,725 385,722 392,715 398,720 404,724 424,731 436,733 473,735 490,737 536,735 553,725 565,722 573,722 585,733 600,736 625,736 650,734 700,734 718,735 725,737 990,738 1008,735 1024,734 1040,735 1060,734 1080,735 1110,736 1130,738 1270,738'],
  ['#1880d8', 1, '187,738 360,738 373,734 392,732 420,731 447,730 490,730 505,733 525,734 545,733 563,732 640,732 690,734 720,736 990,738 1030,737 1060,735 1120,736 1170,738 1270,738'],
  ['#0000c8', 1, '187,738 360,738 390,736 480,735 530,734 565,733 660,732 740,732 800,734 820,734 960,737 1270,737'],
  ['#701848', 1, '187,737 380,737 400,736 540,736 700,734 800,735 1000,735 1050,734 1130,734 1190,736 1270,736'],
  ['#ff6600', 1, '187,797 205,794 251,792 280,791 340,790 362,788 385,781 400,769 410,764 424,762 440,764 464,765 487,772 520,772 540,776 546,770 553,765 560,763 575,764 590,769 612,777 630,776 649,773 660,777 682,779 700,777 712,780 730,788 742,795 755,796 785,795 800,798 825,801 845,808 865,812 900,810 930,809 960,811 985,808 1010,799 1035,795 1060,787 1080,785 1097,782 1115,784 1135,789 1170,795 1200,797 1235,799 1255,798 1270,796'],
  ['#2f6bf5', 1, '187,797 251,794 300,791 365,789 385,785 400,779 424,771 450,767 480,766 500,769 520,771 545,773 570,768 590,767 620,773 650,775 680,777 712,777 730,782 755,790 785,795 800,795 830,800 870,808 890,810 970,811 1000,807 1050,797 1090,790 1105,787 1120,786 1150,788 1180,791 1215,796 1235,797 1270,797']
];

// Price-range volume: top, height, right edge, fill, label
const zones = [
  [199, 41, 442, '#c4c4c4', '4.67% (26,508,439)'], [242, 36, 772, '#c4c4c4', '10.64% (60,440,545)'],
  [280, 36, 792, '#c4c4c4', '10.99% (62,412,854)'], [318, 36, 404, '#c4c4c4', '3.97% (22,568,887)'],
  [356, 36, 1255, '#e59199', '19.35% (109,909,936)'], [394, 37, 509, '#c4c4c4', '5.88% (33,393,188)'],
  [433, 36, 615, '#c4c4c4', '7.78% (44,199,746)'], [471, 36, 929, '#c4c4c4', '13.47% (76,503,005)'],
  [509, 36, 1091, '#4898c8', '16.38% (93,060,266)'], [547, 36, 565, '#c4c4c4', '6.39% (39,130,833)']
];

const rect = (x, y, w, h, f) => `<rect x="${x}" y="${y}" width="${w}" height="${h}" fill="${f}"/>`;
const text = (x, y, s, f = '#000', more = '') => `<text x="${x}" y="${y}" fill="${f}" ${more}>${s}</text>`;
const poly = (pts, c, w) => `<polyline points="${pts}" fill="none" stroke="${c}" stroke-width="${w}" stroke-linejoin="round" transform="translate(.5 .5)"/>`;
const average = n => bars.map((_, i) => {
  const part = bars.slice(Math.max(0, i - n + 1), i + 1).map(b => b[0] ? b[2] : b[3]);
  const seed = Array(n - part.length).fill(564);
  return `${X(i)},${[...seed, ...part].reduce((a, b) => a + b) / n}`;
}).join(' ');

let s = '<g shape-rendering="crispEdges">';
for (const y of [180, 314, 447, 580, 715, 774, 805]) s += rect(184, y, 1130, 1, '#e6e6e6');
for (const x of [185, 358, 691, 1024]) s += rect(x, 99, 1, 718, '#e6e6e6');
for (const [y, h, r, f] of zones) s += rect(184, y, r - 184, h, f);
s += '</g>';
for (const [y, h, r, , t] of zones) s += text(r, y + (h > 40 ? 24 : 22), t, '#000', 'text-anchor="end"');
s += text(655, 224, '배당락(98%)') + text(322, 528, '배당락(98%)') + text(987, 475, '배당락(97%)');
s += '<g shape-rendering="crispEdges">';
bars.forEach(([up, hi, top, bot, lo], i) => {
  const x = Math.round(X(i)), c = up ? RED : BLUE;
  s += rect(x, hi, 1, lo - hi, c) + rect(x - 2, top, 5, Math.max(1, bot - top), c);
  s += rect(x - 2, 740 - Math.abs(volume[i]), 5, Math.abs(volume[i]), volume[i] > 0 ? RED : BLUE);
  const o = osc[i];
  if (o) s += rect(x - 2, o > 0 ? 789 - o : 790, 5, Math.abs(o), o > 0 ? '#ff99cc' : '#99ccff');
});
s += rect(184, 789, 1128, 1, '#ff99cc');
for (const [x, a, b] of [[687, 224, 238], [354, 530, 543], [1020, 473, 489]])
  s += rect(x, a, 1, b - a, RED) + `<path d="M${x - 5} ${b}h11l-5.500 6z" fill="#e00000"/>`;
s += poly(average(5), '#4ca000', 1) + poly(average(10), '#4646ff', 1);
for (const [c, w, p] of curves) s += poly(p, c, w);
for (const y of [392, 468, 546]) s += rect(184, y, 1130, 1, '#0000ff');
s += rect(1311, 519, 3, 46, RED) + rect(1311, 565, 3, 45, BLUE) + '</g>';
s += '<path d="M640 684L1314 446.500" stroke="#0000ff" stroke-width="2"/>';

for (const [x, y, t, c] of [[559, 140, '21,253', 'red'], [694, 190, '19,363', 'red'], [611, 388, '12,733', BLUE], [483, 447, '10,531', '#0000ff'], [739, 429, '11,190', BLUE], [239, 599, '4,838', BLUE], [251, 537, '6,350', 'red'], [1098, 421, '10,700', 'red'], [1271, 512, '7,300', 'red'], [1233, 586, '5,300', BLUE]])
  s += text(x, y, t, c, 'class="p"');
s += text(582, 128, '최고 21,253(2021/08/09, -65.65%)', '#d40000') + '<path d="M580 124.500H562M565 121.500l-3 3 3 3" fill="none" stroke="#d40000"/>';
s += text(262, 611, '최저 4,838(2020/08/24, +50.89%)', BLUE) + '<path d="M260 607.500H241M244 604.500l-3 3 3 3" fill="none" stroke="#0000c8"/>';
s += text(1219, 450, '9,924(+89.57 %)', '#0000ff') + text(875, 578, '5,235( 19° )', '#0000ff');

// Scale column, dividers and date strip
s += '<g shape-rendering="crispEdges">' + rect(1314, 99, 66, 735, '#efefef') + rect(184, 817, 1196, 17, '#efefef');
s += rect(1314, 99, 1, 735, '#b8b8b8') + rect(184, 817, 1196, 1, '#c0c0c0');
s += rect(184, 683, 1196, 1, '#808080') + rect(184, 741, 1196, 1, '#808080');
for (let i = 0; i < 20; i++) s += rect(1315, Math.round(154 + 26.65 * i), (i % 5 === 1) ? 4 : 2, 1, '#b8b8b8');
for (const y of [715, 739, 774, 789, 805]) s += rect(1315, y, 4, 1, '#b8b8b8');
for (const y of [703, 727, 767, 782, 797]) s += rect(1315, y, 2, 1, '#b8b8b8');
for (const x of [185, 358, 691, 1024]) s += rect(x, 818, 1, 5, '#b8b8b8');
s += rect(1322, 511, 50, 28, '#ff0000') + '</g><path d="M1314 519l6-5v10z" fill="red"/>';
s += text(1323, 523, '7,300', '#fff') + text(1323, 536, '(29.89%)', '#fff');
for (const [y, t] of [[384, '12,062'], [461, '9,211'], [539, '6,300']]) {
  s += `<rect x="1314.500" y="${y + .5}" width="${t.length * 6 + 5}" height="15" fill="#e0ffe0" stroke="#000"/>` + text(1317, y + 12, t);
}
for (const [y, t] of [[184, '20,000'], [318, '15,000'], [451, '10,000'], [584, '5,000']]) s += text(1361, y, t, '#000', 'text-anchor="end"');
for (const [x, y, t] of [[1367, 719, '25,000K'], [1367, 739, '0K'], [1380, 778, '1,000.00'], [1380, 793, '0.00'], [1380, 809, '-1,000.00']]) s += text(x, y, t, '#000', 'text-anchor="end"');
for (const [x, t] of [[186, '2020/06'], [359, '2021/01'], [692, '2022/01'], [1025, '2023/01'], [1325, '10/30']]) s += text(x, 830, t);
document.getElementById('plot').innerHTML = s;
```
